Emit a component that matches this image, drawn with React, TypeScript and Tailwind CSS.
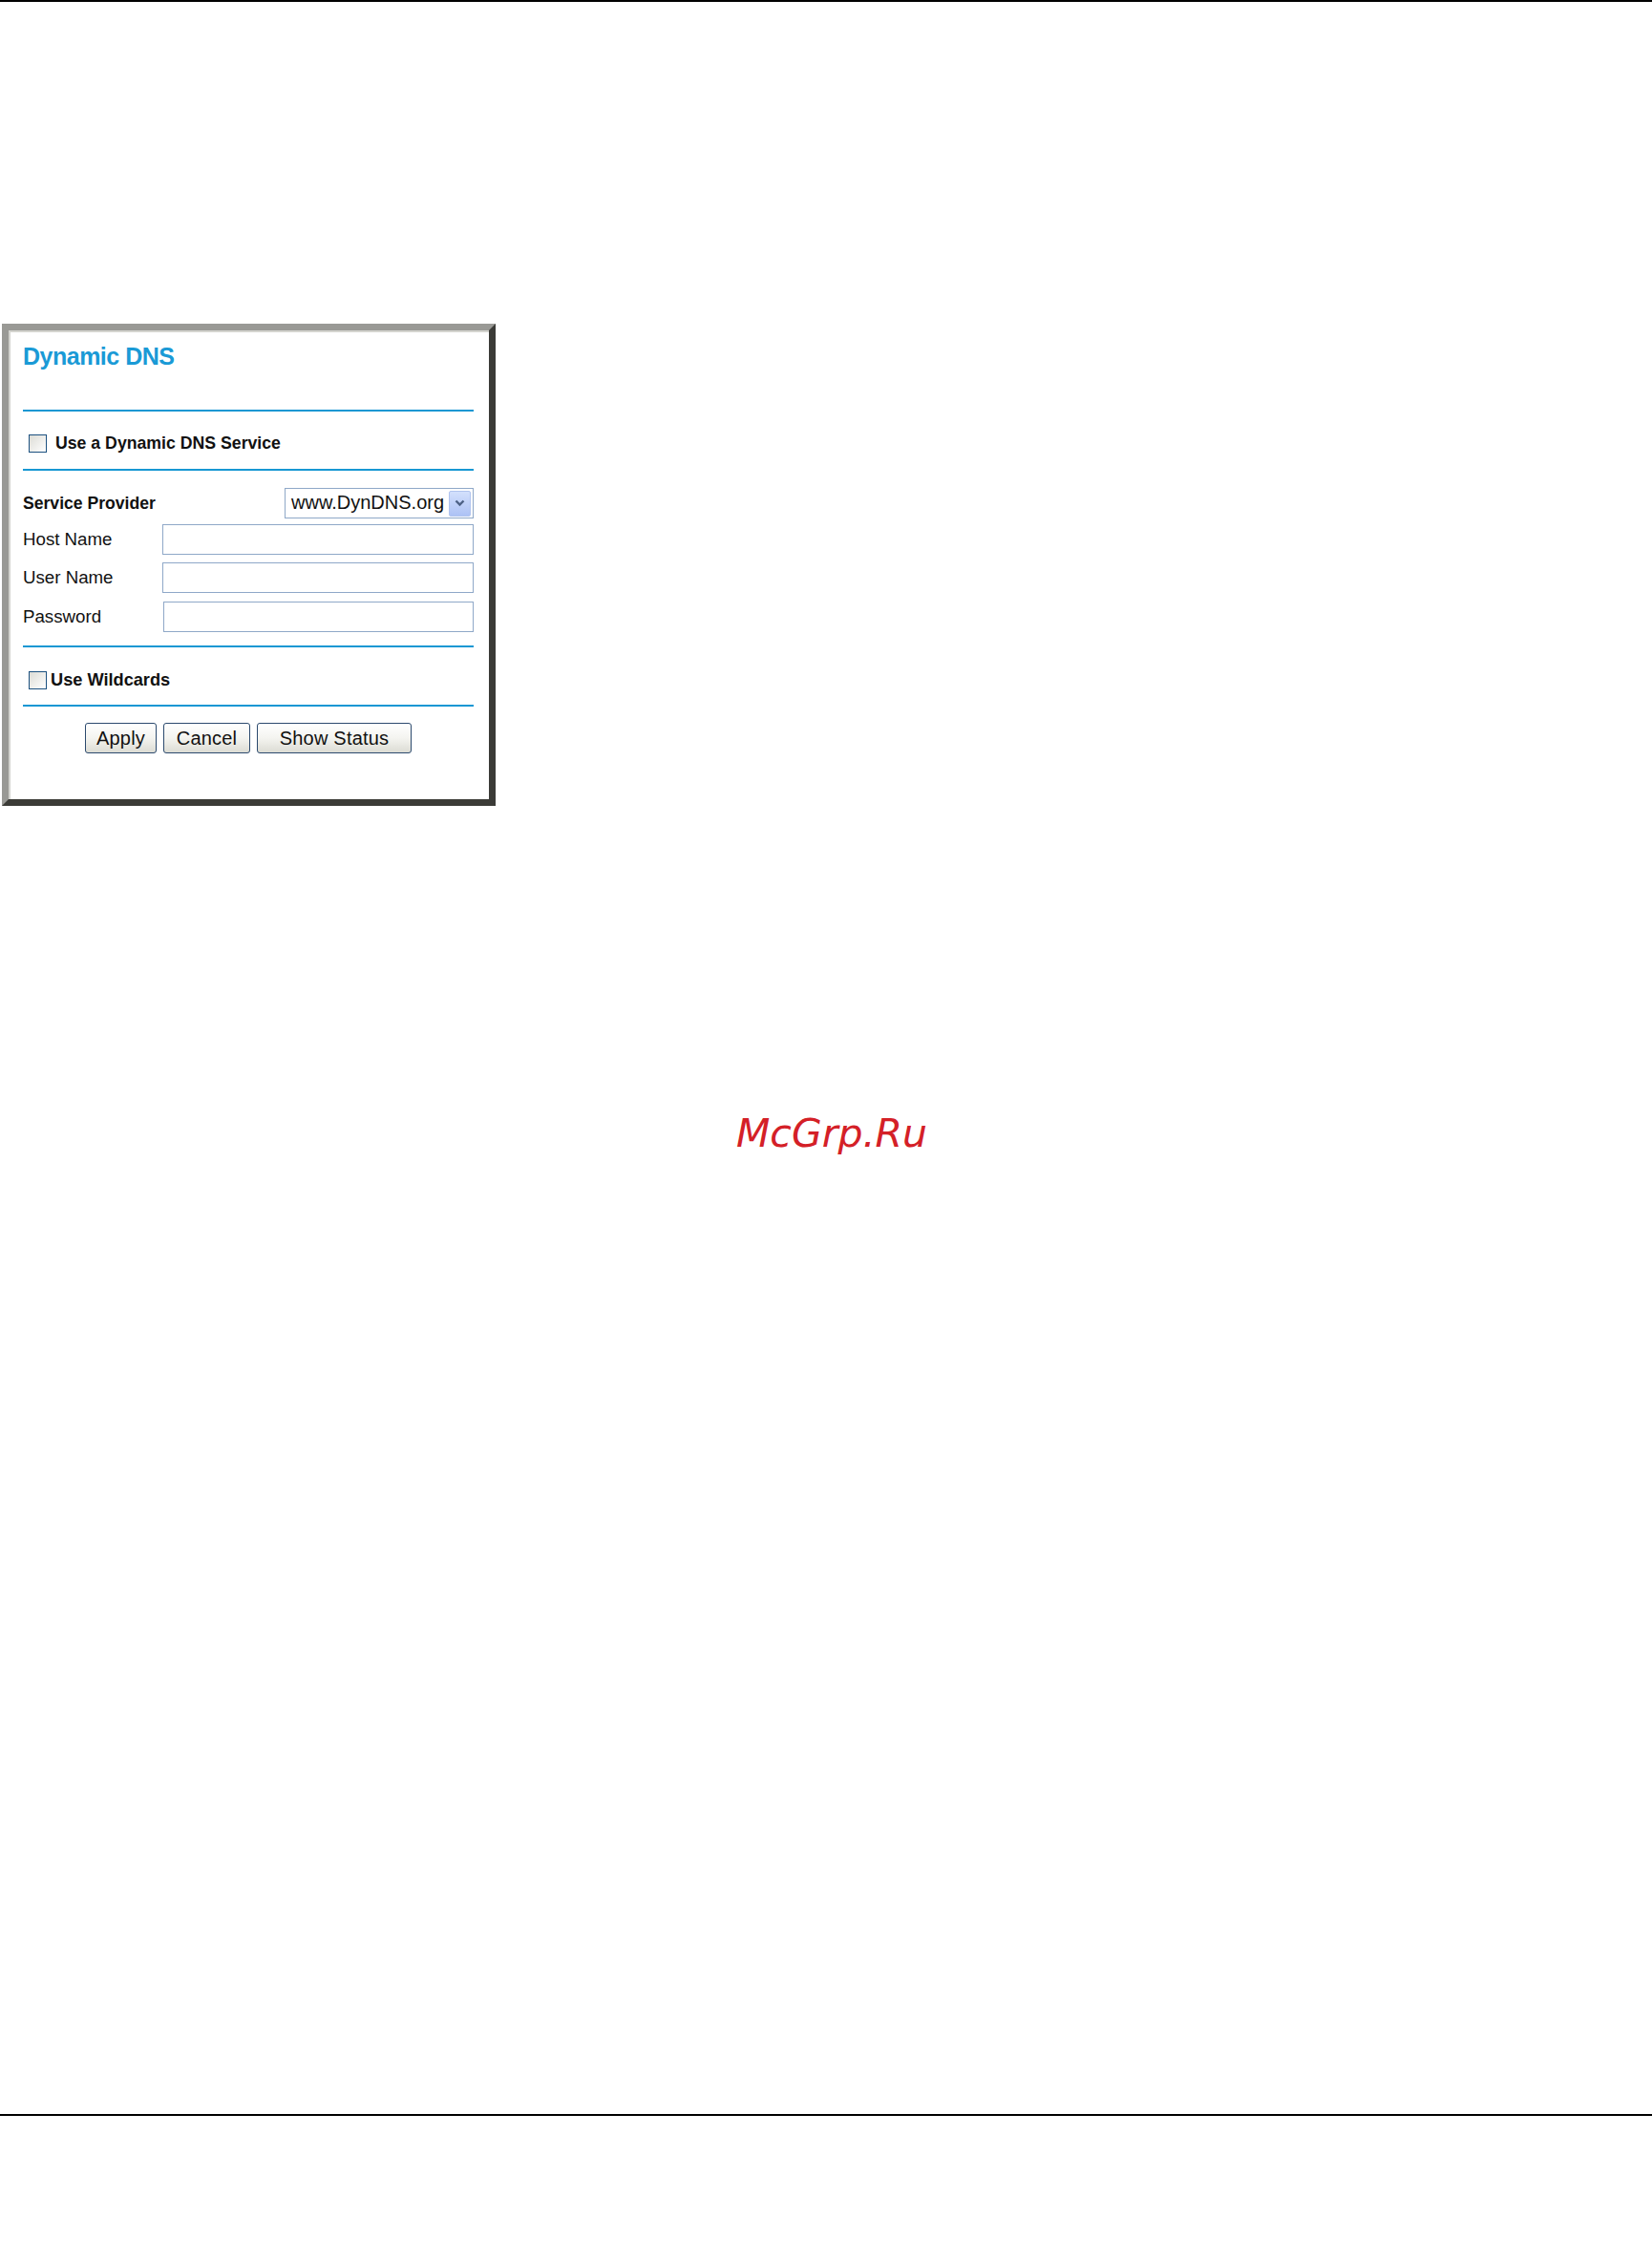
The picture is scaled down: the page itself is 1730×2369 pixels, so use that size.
import React from "react";

const labelFont = { fontFamily: '"Liberation Sans", Arial, sans-serif' };

function Rule() {
  return <div className="h-[2px] w-full bg-[#1797d3]" />;
}

function Checkbox() {
  return (
    <span className="block h-[19px] w-[19px] shrink-0 border border-[#1c5180] bg-gradient-to-br from-[#dcdcd6] to-white" />
  );
}

function TextField({ width }: { width: string }) {
  return (
    <div className={`h-[32px] ${width} border border-[#8fa8c8] bg-white`} />
  );
}

function FormButton({ label, width }: { label: string; width: string }) {
  return (
    <button
      type="button"
      className={`h-[32px] ${width} rounded-[3px] border border-[#2c4a6e] bg-gradient-to-b from-white via-[#f4f4f0] to-[#dcdcd4] text-[20px] leading-none tracking-[0.2px] text-[#111]`}
    >
      {label}
    </button>
  );
}

function ProviderSelect() {
  return (
    <div className="flex h-[32px] w-[198px] items-center border border-[#8fa8c8] bg-white pr-[2px]">
      <span className="flex-1 pb-[3px] pl-[6px] text-[20px] leading-none text-[#111]">
        www.DynDNS.org
      </span>
      <span className="flex h-[27px] w-[23px] items-center justify-center rounded-[2px] border border-[#b0c3ee] bg-gradient-to-b from-[#d3e0fc] to-[#adc2f5]">
        <svg width="11" height="8" viewBox="0 0 11 8">
          <path d="M1.5 1.5 L5.5 5.5 L9.5 1.5" fill="none" stroke="#4d6185" strokeWidth="2.4" />
        </svg>
      </span>
    </div>
  );
}

function DynamicDnsPanel() {
  return (
    <div
      className="ml-[2px] w-[517px] border-[7px] border-t-[#999995] border-l-[#999995] border-r-[#3b3b37] border-b-[#3b3b37] bg-white shadow-[inset_2px_2px_0_#d4d4cf]"
      style={labelFont}
    >
      <div className="pl-[15px] pr-[16px] pt-[13px] pb-[48px]">
        <h2 className="text-[25px] font-bold leading-[28px] tracking-[-0.5px] text-[#1a9ad6]">
          Dynamic DNS
        </h2>

        <div className="mt-[42px]">
          <Rule />
        </div>

        {/* enable toggle */}
        <div className="flex items-center pt-[23px] pb-[17px] pl-[6px]">
          <Checkbox />
          <span className="ml-[9px] text-[17.7px] font-bold leading-[20px] text-[#111]">
            Use a Dynamic DNS Service
          </span>
        </div>

        <Rule />

        {/* account fields */}
        <div className="mt-[18px] flex h-[32px] items-center justify-between">
          <span className="text-[17.6px] font-bold leading-[20px] text-[#111]">
            Service Provider
          </span>
          <ProviderSelect />
        </div>
        <div className="mt-[6px] flex items-center justify-between">
          <span className="text-[18.7px] leading-[20px] text-[#111]">Host Name</span>
          <TextField width="w-[326px]" />
        </div>
        <div className="mt-[8px] flex items-center justify-between">
          <span className="text-[18.7px] leading-[20px] text-[#111]">User Name</span>
          <TextField width="w-[326px]" />
        </div>
        <div className="mt-[9px] flex items-center justify-between">
          <span className="text-[18.7px] leading-[20px] text-[#111]">Password</span>
          <TextField width="w-[325px]" />
        </div>

        <div className="mt-[14px]">
          <Rule />
        </div>

        <div className="flex items-center pt-[24px] pb-[16px] pl-[6px]">
          <Checkbox />
          <span className="ml-[4px] text-[18.2px] font-bold leading-[20px] text-[#111]">
            Use Wildcards
          </span>
        </div>

        <Rule />

        {/* actions */}
        <div className="mt-[17px] flex justify-center gap-[7px]">
          <FormButton label="Apply" width="w-[75px]" />
          <FormButton label="Cancel" width="w-[91px]" />
          <FormButton label="Show Status" width="w-[162px]" />
        </div>
      </div>
    </div>
  );
}

export default function App() {
  return (
    <div className="flex min-h-[2369px] w-full flex-col bg-white">
      <div className="h-[2px] w-full bg-black" />

      <div className="mt-[337px]">
        <DynamicDnsPanel />
      </div>

      <div
        className="ml-[771px] mt-[323px] text-[41px] italic leading-[41px] text-[#d42027]"
        style={{ fontFamily: '"DejaVu Sans", sans-serif' }}
      >
        McGrp.Ru
      </div>

      <div className="mt-[1006px] h-[2px] w-full bg-black" />
    </div>
  );
}
